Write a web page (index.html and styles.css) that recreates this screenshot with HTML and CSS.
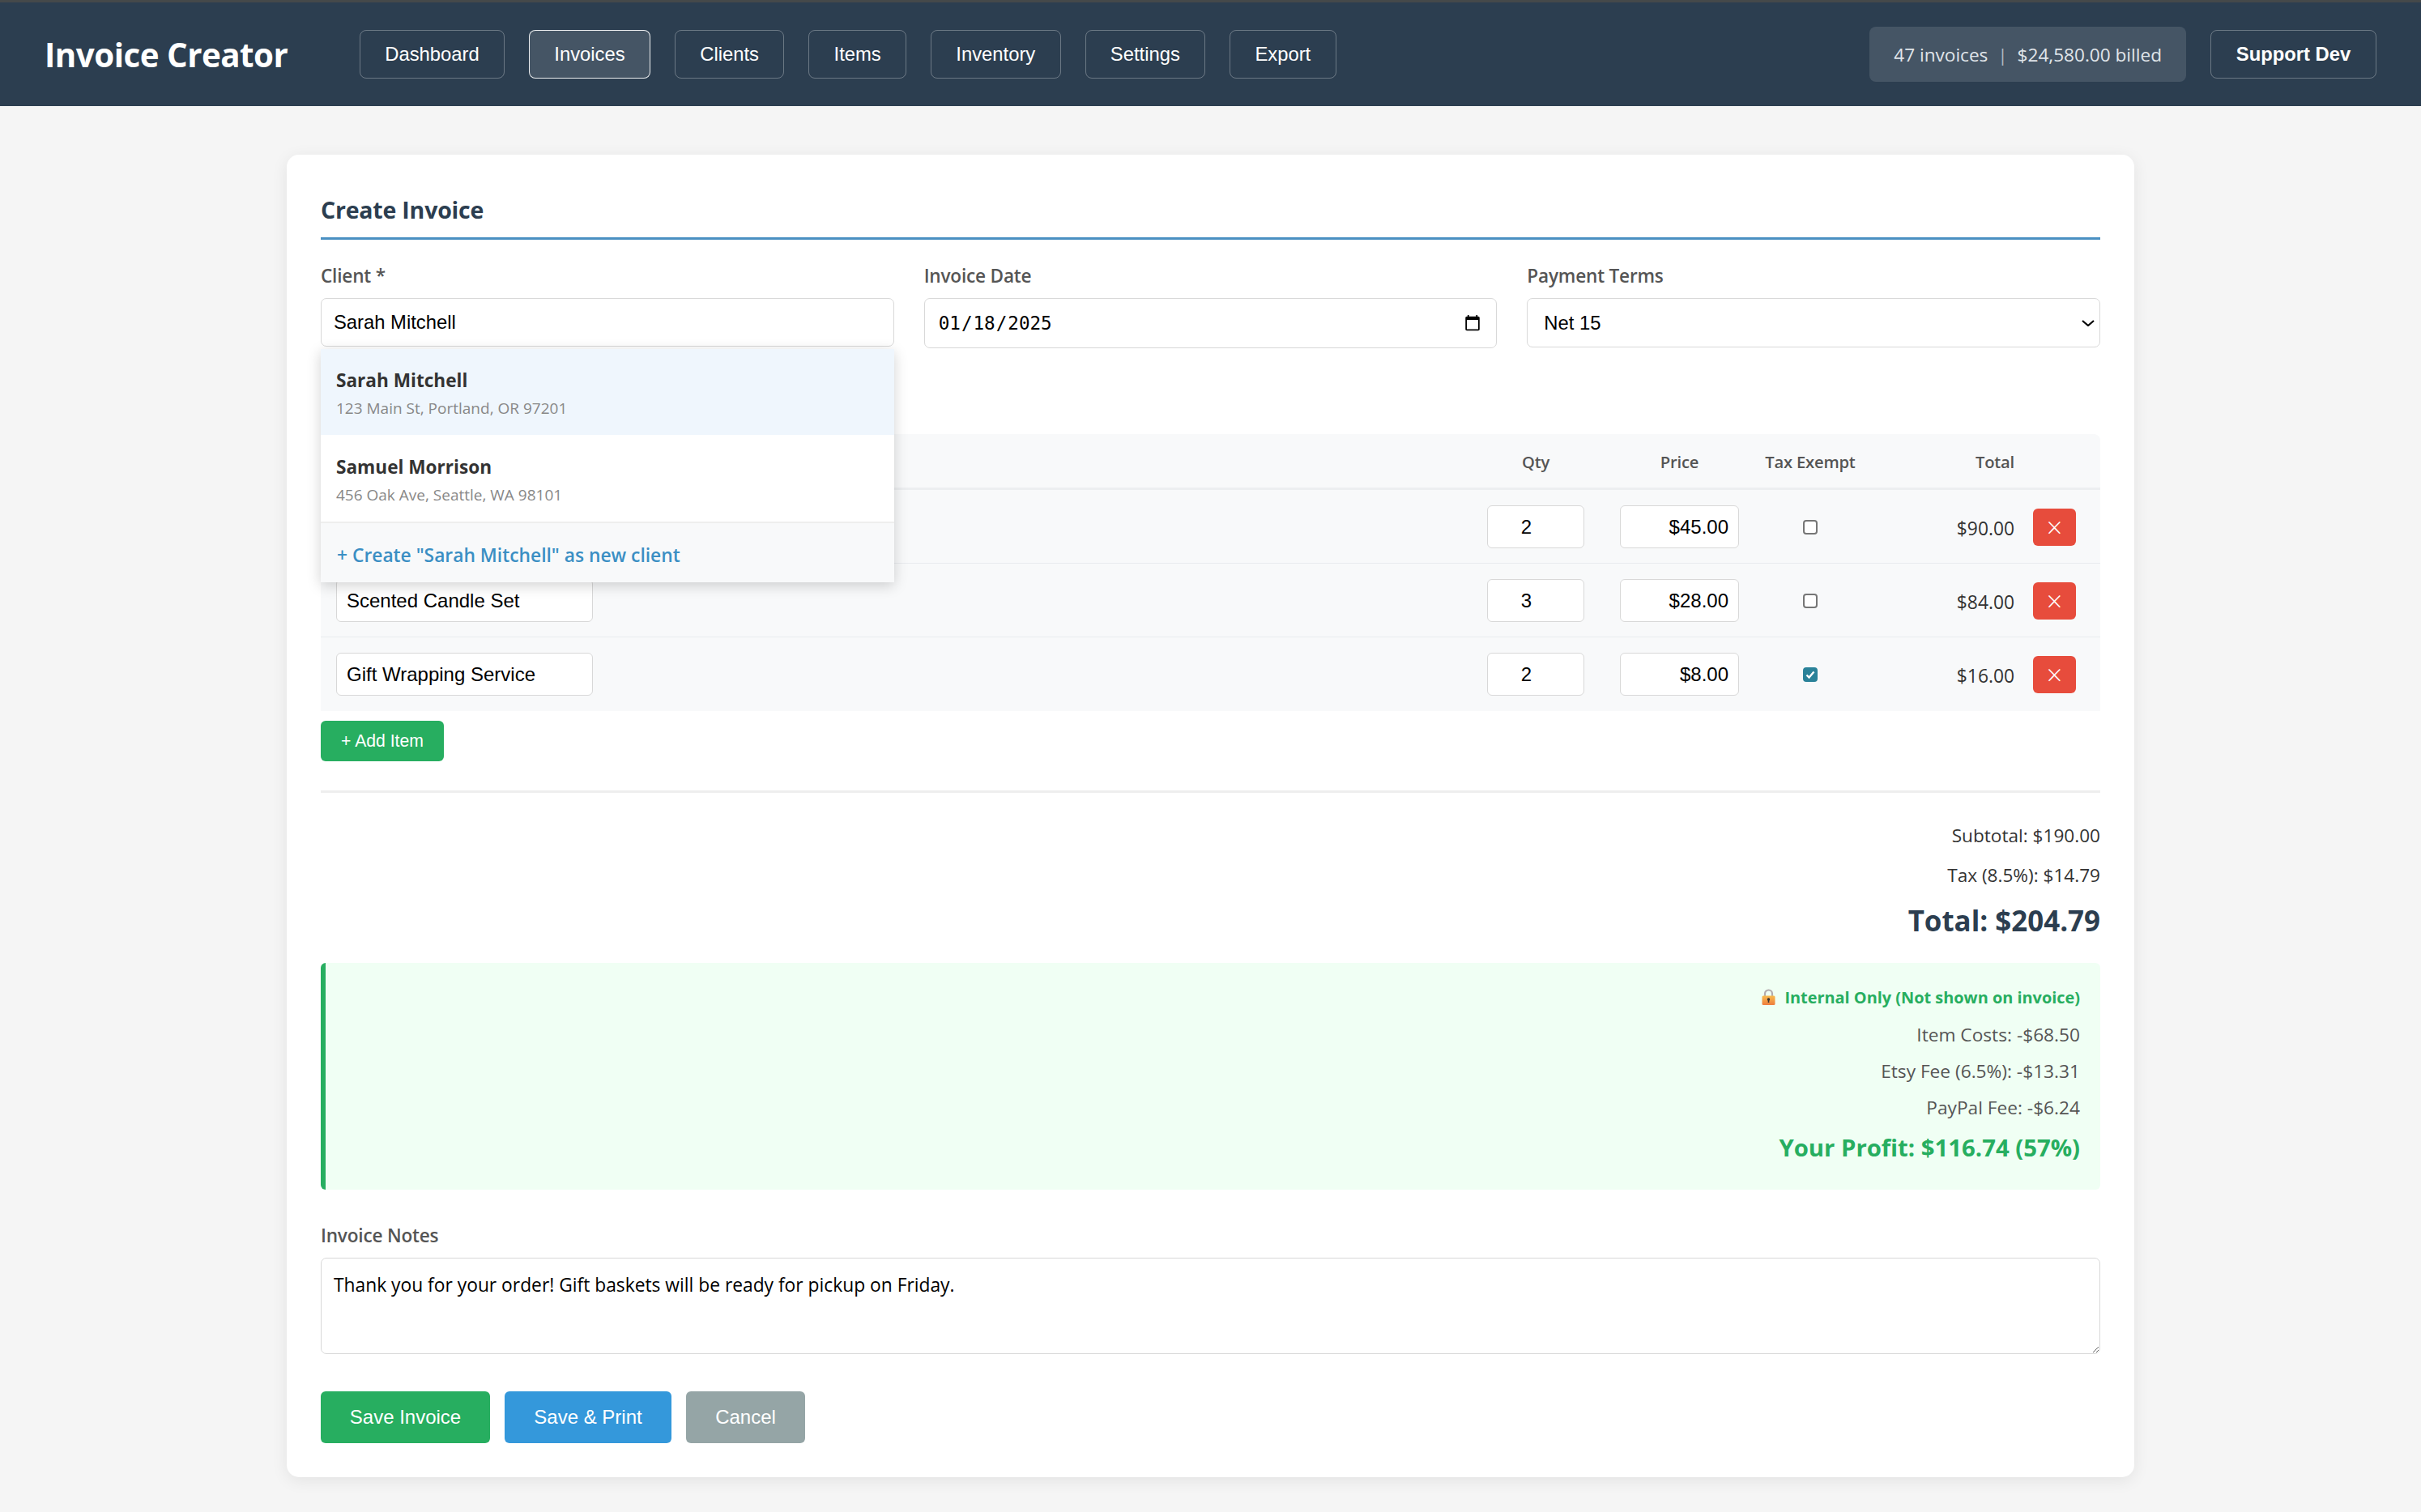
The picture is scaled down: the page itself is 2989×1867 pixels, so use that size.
FILE: index.html
```html
<!DOCTYPE html>
<html lang="en">
<head>
<meta charset="utf-8">
<title>Invoice Creator</title>
<link rel="stylesheet" href="styles.css">
</head>
<body>
<header class="topbar">
  <div class="brand">Invoice Creator</div>
  <nav class="nav">
    <button class="nav-btn">Dashboard</button>
    <button class="nav-btn nav-btn-active">Invoices</button>
    <button class="nav-btn">Clients</button>
    <button class="nav-btn">Items</button>
    <button class="nav-btn">Inventory</button>
    <button class="nav-btn">Settings</button>
    <button class="nav-btn">Export</button>
  </nav>
  <div class="topbar-right">
    <div class="stats">47 invoices <span class="stats-sep">|</span> $24,580.00 billed</div>
    <button class="nav-btn support-btn">Support Dev</button>
  </div>
</header>
<main class="page">
  <section class="card">
    <h2 class="card-title">Create Invoice</h2>
    <div class="form-grid">
      <div class="field">
        <label class="label">Client *</label>
        <div class="client-wrap">
          <input class="control client-input" type="text" value="Sarah Mitchell">
          <div class="dropdown">
            <div class="drop-item drop-item-hover">
              <div class="drop-name">Sarah Mitchell</div>
              <div class="drop-addr">123 Main St, Portland, OR 97201</div>
            </div>
            <div class="drop-item">
              <div class="drop-name">Samuel Morrison</div>
              <div class="drop-addr">456 Oak Ave, Seattle, WA 98101</div>
            </div>
            <div class="drop-create">+ Create "Sarah Mitchell" as new client</div>
          </div>
        </div>
      </div>
      <div class="field">
        <label class="label">Invoice Date</label>
        <input class="control date-input" type="date" value="2025-01-18">
      </div>
      <div class="field">
        <label class="label">Payment Terms</label>
        <select class="control select-input">
          <option>Net 15</option>
          <option>Net 30</option>
        </select>
      </div>
    </div>

    <div class="items">
      <div class="items-row items-head">
        <div></div>
        <div class="center">Qty</div>
        <div class="center">Price</div>
        <div class="center nowrap">Tax Exempt</div>
        <div class="head-total">Total</div>
      </div>
      <div class="items-row">
        <div><input class="cell-input item-name" type="text"></div>
        <div><input class="cell-input qty" type="text" value="2"></div>
        <div><input class="cell-input price" type="text" value="$45.00"></div>
        <div class="center"><input class="check" type="checkbox"></div>
        <div class="total-cell"><span class="line-total">$90.00</span><button class="del-btn">×</button></div>
      </div>
      <div class="items-row">
        <div><input class="cell-input item-name" type="text" value="Scented Candle Set"></div>
        <div><input class="cell-input qty" type="text" value="3"></div>
        <div><input class="cell-input price" type="text" value="$28.00"></div>
        <div class="center"><input class="check" type="checkbox"></div>
        <div class="total-cell"><span class="line-total">$84.00</span><button class="del-btn">×</button></div>
      </div>
      <div class="items-row items-last">
        <div><input class="cell-input item-name" type="text" value="Gift Wrapping Service"></div>
        <div><input class="cell-input qty" type="text" value="2"></div>
        <div><input class="cell-input price" type="text" value="$8.00"></div>
        <div class="center"><input class="check" type="checkbox" checked></div>
        <div class="total-cell"><span class="line-total">$16.00</span><button class="del-btn">×</button></div>
      </div>
    </div>
    <button class="btn btn-add">+ Add Item</button>

    <div class="totals">
      <div class="totals-line">Subtotal: $190.00</div>
      <div class="totals-line">Tax (8.5%): $14.79</div>
      <div class="totals-grand">Total: $204.79</div>
    </div>

    <div class="internal">
      <div class="internal-head">
        <svg class="lock" viewBox="0 0 17 20" aria-hidden="true">
          <defs>
            <linearGradient id="lockBody" x1="0" y1="0" x2="0" y2="1">
              <stop offset="0" stop-color="#f8bb4e"/>
              <stop offset="1" stop-color="#ee7d3e"/>
            </linearGradient>
          </defs>
          <path d="M4 9V6a4.500 4.500 0 0 1 9 0v3" fill="none" stroke="#b3abae" stroke-width="2.200"/>
          <rect x="0.500" y="8.500" width="16" height="11.500" rx="1.500" fill="url(#lockBody)"/>
          <circle cx="8.500" cy="13" r="1.700" fill="#3a3230"/>
          <rect x="7.700" y="13" width="1.600" height="4" fill="#3a3230"/>
        </svg>
        <span>Internal Only (Not shown on invoice)</span>
      </div>
      <div class="internal-line">Item Costs: -$68.50</div>
      <div class="internal-line">Etsy Fee (6.5%): -$13.31</div>
      <div class="internal-line">PayPal Fee: -$6.24</div>
      <div class="profit">Your Profit: $116.74 (57%)</div>
    </div>

    <div class="notes">
      <label class="label">Invoice Notes</label>
      <textarea class="notes-input">Thank you for your order! Gift baskets will be ready for pickup on Friday.</textarea>
    </div>

    <div class="actions">
      <button class="btn btn-green">Save Invoice</button>
      <button class="btn btn-blue">Save &amp; Print</button>
      <button class="btn btn-grey">Cancel</button>
    </div>
  </section>
</main>
</body>
</html>
```
FILE: styles.css
```css
* { box-sizing: border-box; }

html, body { margin: 0; padding: 0; }

body {
  background: #f5f5f5;
  font-family: "Open Sans", "Noto Sans", sans-serif;
  color: #333;
  height: 1867px;
  overflow: hidden;
}

button, input, select { font-family: "Liberation Sans", Arial, sans-serif; }

/* Top bar */
.topbar {
  display: flex;
  align-items: center;
  height: 131px;
  padding: 0 55px;
  background: #2c3e50;
  border-top: 3px solid #45494a;
}

.brand {
  width: 299px;
  margin-right: 90px;
  font-size: 40.3px;
  font-weight: 700;
  letter-spacing: -0.5px;
  color: #fff;
  white-space: nowrap;
}

.nav { display: flex; gap: 30px; }

.nav-btn {
  height: 60px;
  padding: 0 30.3px;
  background: transparent;
  border: 1px solid rgba(255, 255, 255, 0.3);
  border-radius: 8px;
  color: #fff;
  font-size: 23.8px;
  white-space: nowrap;
}

.nav-btn-active {
  background: rgba(255, 255, 255, 0.12);
  border-color: rgba(255, 255, 255, 0.9);
}

.topbar-right {
  display: flex;
  align-items: center;
  gap: 30px;
  margin-left: auto;
}

.support-btn { font-weight: 700; width: 205px; padding: 0; }

.stats {
  display: flex;
  align-items: center;
  height: 68px;
  padding: 0 30px;
  border-radius: 8px;
  background: rgba(255, 255, 255, 0.12);
  color: #e0e5ea;
  font-size: 22.6px;
  white-space: pre;
}

.stats-sep { margin: 0 6px; color: #aeb8c2; }

/* Card */
.page { padding: 60px 0 43px; }

.card {
  width: 2281px;
  margin: 0 auto;
  padding: 42px 42px 42px;
  background: #fff;
  border-radius: 15px;
  box-shadow: 0 4px 20px rgba(0, 0, 0, 0.08);
}

.card-title {
  margin: 0;
  height: 63px;
  line-height: 52px;
  padding-bottom: 10px;
  border-bottom: 3px solid #4a90c2;
  font-size: 28.5px;
  font-weight: 700;
  letter-spacing: -0.2px;
  color: #2c3e50;
}

.form-grid {
  display: grid;
  grid-template-columns: repeat(3, 1fr);
  gap: 37px;
  align-items: start;
  height: 106px;
  margin-top: 28px;
}

.label {
  display: block;
  height: 34px;
  line-height: 34px;
  margin-bottom: 10px;
  font-size: 22.6px;
  font-weight: 600;
  letter-spacing: -0.2px;
  color: #555;
}

.client-wrap { position: relative; }

.control {
  display: block;
  width: 100%;
  border: 1px solid #d8d8d8;
  border-radius: 7px;
  background: #fff;
  color: #000;
  font-size: 23.8px;
}

.client-input { height: 60px; padding: 0 15px; }

.date-input {
  height: 62px;
  padding: 0 16px;
  font-family: "DejaVu Sans Mono", "Liberation Mono", monospace;
  font-size: 22.6px;
}

.select-input {
  height: 61px;
  padding: 0 20px;
  appearance: none;
  background: #fff url("data:image/svg+xml,%3Csvg xmlns='http://www.w3.org/2000/svg' viewBox='0 0 16 8'%3E%3Cpath d='M1 1l7 6 7-6' fill='none' stroke='%23000' stroke-width='2.200'/%3E%3C/svg%3E") no-repeat right 6px center / 16px 8px;
}

/* Dropdown */
.dropdown {
  position: absolute;
  top: 63px;
  left: 0;
  right: 0;
  z-index: 5;
  background: #fff;
  box-shadow: 0 4px 16px rgba(0, 0, 0, 0.18);
}

.drop-item {
  height: 107px;
  padding: 21.500px 19px 0;
}

.drop-item-hover { background: #eff6fd; height: 106px; padding-top: 20.500px; }

.drop-name {
  line-height: 36px;
  font-size: 22.6px;
  font-weight: 700;
  color: #333;
}

.drop-addr {
  line-height: 32px;
  font-size: 19px;
  color: #888;
}

.drop-create {
  height: 75px;
  padding: 22px 20px 0;
  border-top: 2px solid #eee;
  background: #f8f9fa;
  line-height: 36px;
  font-size: 22.8px;
  font-weight: 600;
  color: #3b8fc4;
}

/* Items table */
.items {
  margin-top: 106px;
  border-radius: 8px 8px 0 0;
  background: #f8f9fa;
}

.items-row {
  display: grid;
  grid-template-columns: 1fr 120px 147px 88px 240px;
  column-gap: 44px;
  align-items: center;
  height: 91px;
  padding: 0 30px 0 19px;
  box-shadow: inset 0 -1px 0 #e9ecef;
  font-size: 23px;
}

.items-head {
  height: 69px;
  padding-top: 2px;
  border-bottom: 3px solid #eceef0;
  box-shadow: none;
  font-size: 20.2px;
  font-weight: 600;
  letter-spacing: -0.2px;
  color: #555;
}

.items-last { box-shadow: none; }

.center { display: flex; justify-content: center; }
.nowrap { white-space: nowrap; }
.head-total { padding-right: 76px; text-align: right; }

.cell-input {
  display: block;
  height: 53px;
  width: 100%;
  border: 1px solid #d8d8d8;
  border-radius: 6px;
  background: #fff;
  color: #000;
  font-size: 24px;
}

.item-name { width: 317px; padding: 0 12px; }
.qty { padding: 0 36px 0 13px; text-align: center; }
.price { padding: 0 12px; text-align: right; }

.check {
  appearance: none;
  width: 18px;
  height: 18px;
  margin: 0;
  border: 2px solid #767676;
  border-radius: 4px;
  background: #fff;
}

.check:checked {
  border-color: #2a8299;
  background: #2a8299 url("data:image/svg+xml,%3Csvg xmlns='http://www.w3.org/2000/svg' viewBox='0 0 14 14'%3E%3Cpath d='M2.500 7.500l3 3 6-7' fill='none' stroke='%23fff' stroke-width='2.400'/%3E%3C/svg%3E") center / 100% 100% no-repeat;
}

.total-cell {
  display: flex;
  align-items: center;
  justify-content: flex-end;
  gap: 23px;
}

.line-total { font-size: 22.8px; color: #333; padding-top: 3px; }

.del-btn {
  width: 53px;
  height: 46px;
  padding: 0;
  border: 0;
  border-radius: 6px;
  background: #e74c3c;
  color: #fff;
  font-family: "Open Sans", sans-serif;
  font-size: 34px;
  font-weight: 300;
  line-height: 46px;
}

/* Buttons */
.btn {
  display: block;
  border: 0;
  border-radius: 6px;
  color: #fff;
  font-size: 24px;
}

.btn-add {
  width: 152px;
  height: 50px;
  margin-top: 12px;
  background: #27ae60;
  font-size: 21.2px;
}

/* Totals */
.totals {
  margin-top: 36px;
  padding-top: 29px;
  border-top: 3px solid #eee;
  text-align: right;
}

.totals-line {
  line-height: 48.500px;
  font-size: 22.6px;
  color: #333;
}

.totals-grand {
  height: 84px;
  line-height: 64px;
  font-size: 34.9px;
  font-weight: 700;
  color: #2c3e50;
}

/* Internal panel */
.internal {
  height: 280px;
  padding: 24px 25px 0 0;
  border-left: 6px solid #27ae60;
  border-radius: 6px;
  background: #f0fff4;
  text-align: right;
}

.internal-head {
  display: flex;
  justify-content: flex-end;
  align-items: center;
  gap: 11px;
  height: 42px;
  padding-bottom: 6px;
  font-size: 19.9px;
  font-weight: 700;
  color: #27ae60;
}

.lock { width: 17px; height: 20px; }

.internal-line {
  line-height: 45px;
  font-size: 22.7px;
  color: #555;
}

.profit {
  line-height: 54px;
  font-size: 29.3px;
  font-weight: 700;
  color: #27ae60;
}

/* Notes */
.notes { margin-top: 40px; }

.notes .label { margin-bottom: 10px; }

.notes-input {
  display: block;
  width: 100%;
  height: 119px;
  padding: 16px 15px;
  border: 1px solid #d8d8d8;
  border-radius: 7px;
  color: #000;
  font-family: "Open Sans", "Noto Sans", sans-serif;
  font-size: 22.8px;
  line-height: 34px;
}

/* Actions */
.actions {
  display: flex;
  gap: 18px;
  margin-top: 46px;
}

.actions .btn { height: 64px; }
.btn-green { width: 209px; background: #27ae60; }
.btn-blue { width: 206px; background: #3498db; }
.btn-grey { width: 147px; background: #95a5a6; }
```
